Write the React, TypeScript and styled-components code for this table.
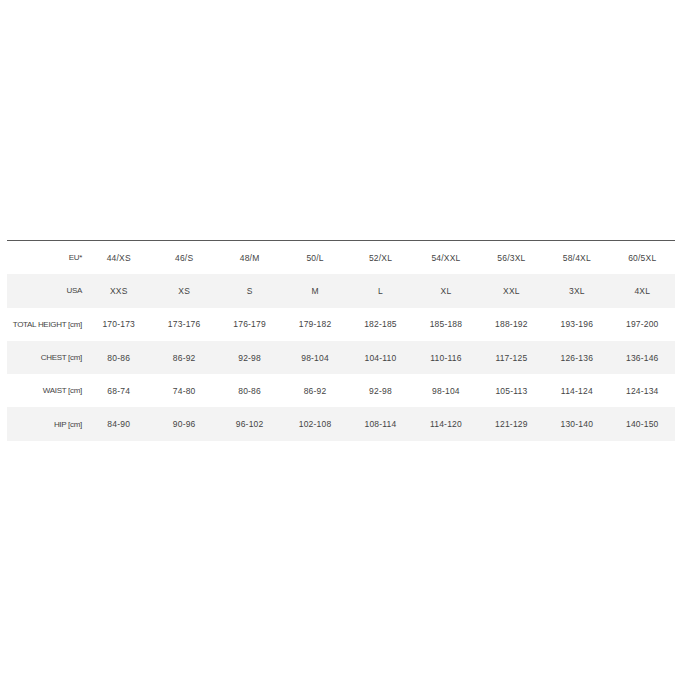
import React from 'react'
import styled, { createGlobalStyle } from 'styled-components'

const sizes = ['44/XS', '46/S', '48/M', '50/L', '52/XL', '54/XXL', '56/3XL', '58/4XL', '60/5XL']

const rows: { label: string; values: string[] }[] = [
  { label: 'EU*', values: sizes },
  { label: 'USA', values: ['XXS', 'XS', 'S', 'M', 'L', 'XL', 'XXL', '3XL', '4XL'] },
  { label: 'TOTAL HEIGHT [cm]', values: ['170-173', '173-176', '176-179', '179-182', '182-185', '185-188', '188-192', '193-196', '197-200'] },
  { label: 'CHEST [cm]', values: ['80-86', '86-92', '92-98', '98-104', '104-110', '110-116', '117-125', '126-136', '136-146'] },
  { label: 'WAIST [cm]', values: ['68-74', '74-80', '80-86', '86-92', '92-98', '98-104', '105-113', '114-124', '124-134'] },
  { label: 'HIP [cm]', values: ['84-90', '90-96', '96-102', '102-108', '108-114', '114-120', '121-129', '130-140', '140-150'] },
]

const GlobalStyle = createGlobalStyle`
  html, body {
    margin: 0;
    padding: 0;
    background: #ffffff;
  }
`

const Page = styled.div`
  width: 680px;
  height: 680px;
  box-sizing: border-box;
  padding: 240px 5px 0 7px;
`

const Table = styled.div`
  border-top: 1px solid #5a5a5a;
  display: flex;
  flex-direction: column;
`

const Row = styled.div<{ shaded: boolean }>`
  display: grid;
  grid-template-columns: 79px repeat(9, 1fr);
  height: 33.3px;
  align-items: center;
  background: ${p => (p.shaded ? '#f3f3f3' : 'transparent')};
  font-family: 'Liberation Sans', Arial, sans-serif;
  font-size: 8.5px;
  color: #444444;
`

const Label = styled.div`
  text-align: right;
  padding-right: 4px;
  white-space: nowrap;
  font-size: 8px;
  letter-spacing: -0.3px;
`

const Cell = styled.div`
  text-align: center;
  white-space: nowrap;
  letter-spacing: 0.2px;
`

export default function App() {
  return (
    <>
      <GlobalStyle />
      <Page>
        <Table>
          {rows.map((r, i) => (
            <Row key={r.label} shaded={i % 2 === 1}>
              <Label>{r.label}</Label>
              {r.values.map(v => (
                <Cell key={v}>{v}</Cell>
              ))}
            </Row>
          ))}
        </Table>
      </Page>
    </>
  )
}
